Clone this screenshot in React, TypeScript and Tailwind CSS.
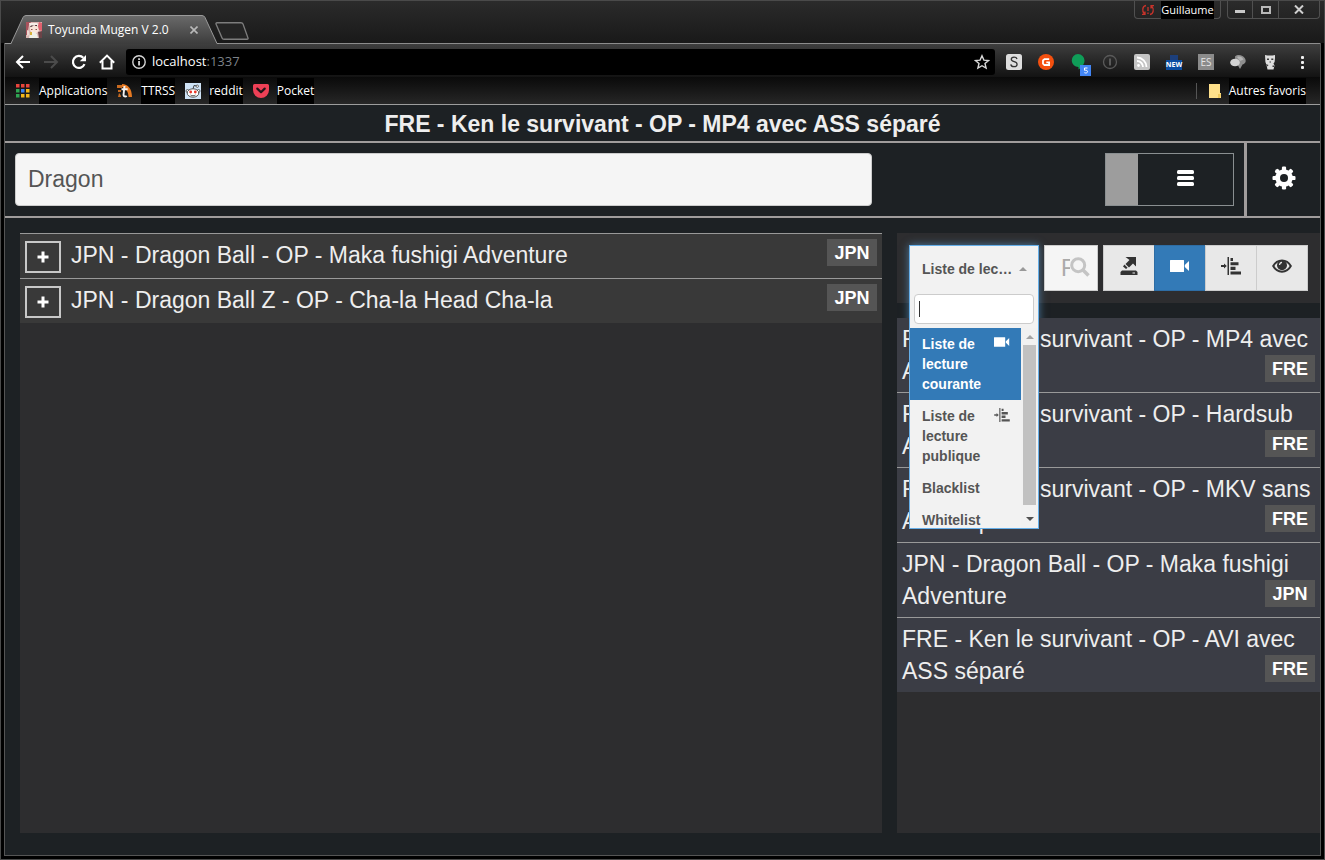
import React from "react";

type IconProps = { className?: string };

/* ---------- browser drawings ---------- */

const TabFavicon = () => (
  <svg viewBox="0 0 16 16" className="size-4 shrink-0" aria-hidden="true">
    <rect width="16" height="16" fill="#d9b7b3" />
    <path d="M0 0h5l-2 3-1 5-1 5H0z" fill="#a8525c" />
    <path d="M3 1h8l2 2-1 1-4-1-4 2z" fill="#f6efe9" />
    <path d="M5 3.500h2.500v1.500H4zM9 3h2v1.500H9z" fill="#4a3034" />
    <path d="M4 5.500l4-2 4 1 1 4-3 3H6L4 8z" fill="#f9e6da" />
    <path d="M13 0l3 1v8l-3-1-1-4z" fill="#e0616e" />
    <path d="M1 8l2 1v4l-2 1z" fill="#ecd8d2" />
    <path d="M4 11l4-1 3 2 1 4H3z" fill="#eef0e6" />
    <path d="M4 10h2v3H4z" fill="#d6b13a" />
    <path d="M5 7h1.500v1H5zM9.500 7H11v1H9.500z" fill="#8d5350" />
    <path d="M12 10l4-1v7h-3z" fill="#6b4347" />
  </svg>
);

const BackIcon = () => (
  <svg viewBox="0 0 16 16" className="size-4" fill="none" stroke="#fff" strokeWidth="2" aria-hidden="true">
    <path d="M15 8H2M8 2L2 8l6 6" />
  </svg>
);

const ForwardIcon = () => (
  <svg viewBox="0 0 16 16" className="size-4" fill="none" stroke="#4b4b4b" strokeWidth="2" aria-hidden="true">
    <path d="M1 8h13M8 2l6 6-6 6" />
  </svg>
);

const ReloadIcon = () => (
  <svg viewBox="0 0 16 16" className="size-4" aria-hidden="true">
    <path d="M13.500 10.200A6 6 0 1 1 12.300 3.800" fill="none" stroke="#fff" strokeWidth="2.200" />
    <path d="M15 1v6.200H8.800z" fill="#fff" />
  </svg>
);

const HomeIcon = () => (
  <svg viewBox="0 0 16 16" className="size-4" fill="none" stroke="#fff" strokeWidth="2" aria-hidden="true">
    <path d="M.8 8.700L8 1.600l7.200 7.100" />
    <path d="M3.500 7v7.500h9V7" />
  </svg>
);

const InfoIcon = () => (
  <svg viewBox="0 0 16 16" className="size-4 shrink-0" aria-hidden="true">
    <circle cx="8" cy="8" r="6.200" fill="none" stroke="#d5d5d5" strokeWidth="1.400" />
    <path d="M7.200 7h1.700v4.500H7.200zM7.200 4.300h1.700V6H7.200z" fill="#e4e4e4" />
  </svg>
);

const StarIcon = () => (
  <svg viewBox="0 0 16 16" className="size-4" aria-hidden="true">
    <path d="M8 1.800l1.900 4.300 4.600.4-3.500 3 1.100 4.600L8 11.700l-4.100 2.400L5 9.500l-3.500-3 4.600-.4z" fill="none" stroke="#d8d8d8" strokeWidth="1.400" />
  </svg>
);

const StylishIcon = () => (
  <svg viewBox="0 0 16 16" className="size-4" aria-hidden="true">
    <rect width="16" height="16" rx="2.500" fill="#dedede" />
    <path d="M11 5C10.600 3.700 9.500 3.200 8.100 3.200c-1.700 0-2.800.8-2.800 2.100 0 3.100 5.800 1.700 5.800 4.900 0 1.500-1.200 2.500-3.100 2.500-1.800 0-3-.8-3.200-2.400" fill="none" stroke="#333" strokeWidth="1.300" />
  </svg>
);

const GIcon = () => (
  <svg viewBox="0 0 16 16" className="size-4" aria-hidden="true">
    <circle cx="8" cy="8" r="8" fill="#f4500f" />
    <path d="M11.200 5.200H6.500L5 6.400v3.300L6.400 11h4.700V8.300H8.300" fill="none" stroke="#fff" strokeWidth="1.800" />
  </svg>
);

const HangoutsIcon = () => (
  <svg viewBox="0 0 20 22" className="h-[22px] w-5" aria-hidden="true">
    <path d="M7 0a6.500 6.500 0 0 1 6.500 6.500c0 4-3 7-6 9V13A6.500 6.500 0 1 1 7 0z" fill="#0f9d58" />
    <rect x="9" y="11" width="11" height="11" fill="#4285f4" />
    <path d="M16.500 14h-3v2.300c2.200-.5 3 .3 3 1.400s-1.500 1.700-3.100 1" fill="none" stroke="#fff" strokeWidth="1" />
  </svg>
);

const PasswordIcon = () => (
  <svg viewBox="0 0 16 16" className="size-4" fill="none" stroke="#5a5a5a" aria-hidden="true">
    <circle cx="8" cy="8" r="6.500" strokeWidth="1.300" />
    <path d="M8 4.500v7" strokeWidth="2" />
  </svg>
);

const FeedIcon = () => (
  <svg viewBox="0 0 16 16" className="size-4" aria-hidden="true">
    <rect width="16" height="16" rx="2" fill="#c4c4c4" />
    <circle cx="4.500" cy="11.500" r="1.400" fill="#fff" />
    <path d="M3 7a6 6 0 0 1 6 6M3 3.500A9.500 9.500 0 0 1 12.500 13" fill="none" stroke="#fff" strokeWidth="1.800" />
  </svg>
);

const NewsIcon = () => (
  <span className="flex size-4 flex-col justify-end">
    <span className="h-[5px] w-2 self-center bg-[#1c3f7c]" />
    <span className="flex h-[10px] items-center justify-center bg-[#0b4da2] text-[7px] font-bold text-white">NEW</span>
  </span>
);

const EsIcon = () => (
  <span className="flex size-4 items-center justify-center bg-[#8b8b8b] text-[10px] text-[#e4e4e4]">ES</span>
);

const CloudIcon = () => (
  <svg viewBox="0 0 16 16" className="size-4" aria-hidden="true">
    <path d="M5 2.500C8 0 13 1 15 4.500c1.500 3 .5 5-2.500 6L10 15l-2-3.500-2.500-1z" fill="#8f8f8f" />
    <ellipse cx="5" cy="8.500" rx="4.800" ry="3.800" fill="#d2d2d2" />
    <path d="M7 3c3-1 5 0 6.500 2.500L10 7z" fill="#b5b5b5" />
  </svg>
);

const PandaIcon = () => (
  <svg viewBox="0 0 16 16" className="size-4" aria-hidden="true">
    <path d="M3 1l2.500.6h5L13 1v3l-.4 4-1.100 1.500 1 2-1 4H5.500l-1-4.500L3.400 8z" fill="#dedede" />
    <path d="M5 4.500h2v1.500H5zM9.300 4.500h2V6h-2zM7.500 7.500h1.500v1H7.500zM4 10l2.500 1L5.500 12.500zM10.500 11.500H12V13h-1.500z" fill="#3a3a3a" />
  </svg>
);

const DotsIcon = () => (
  <svg viewBox="0 0 16 16" className="size-4" fill="#f0f0f0" aria-hidden="true">
    <rect x="7" y="2" width="3" height="3" rx="1" />
    <rect x="7" y="7" width="3" height="3" rx="1" />
    <rect x="7" y="12" width="3" height="3" rx="1" />
  </svg>
);

const APP_COLORS = ["#e8453c", "#e8453c", "#e8453c", "#2fa653", "#3b82f0", "#f4b61a", "#2fa653", "#f4b61a", "#f4b61a"];

const AppsIcon = () => (
  <svg viewBox="0 0 16 16" className="size-4" aria-hidden="true">
    {APP_COLORS.map((color, i) => (
      <rect key={i} x={1 + (i % 3) * 5} y={1 + Math.floor(i / 3) * 5} width="3.500" height="3.500" fill={color} />
    ))}
  </svg>
);

const TtrssIcon = () => (
  <svg viewBox="0 0 16 16" className="size-4" aria-hidden="true">
    <path d="M5 1c6 0 10 5 10 13h-3.500C11.500 8 8 5 5 4z" fill="#e87a22" />
    <path d="M0 2h5v3H0zM1 7h3v2H1zM2 10c1 1 2 2 2 4H1z" fill="#c96a20" />
    <path d="M7.500 3L6.500 12c0 1.500 2 2 3.200.8M4.500 6.300h6.200" fill="none" stroke="#f2f2f2" strokeWidth="1.900" />
  </svg>
);

const RedditIcon = () => (
  <svg viewBox="0 0 16 16" className="size-4" aria-hidden="true">
    <rect width="16" height="16" fill="#cfe3f6" />
    <path d="M8 6l1-3.500 3 .5" fill="none" stroke="#333" strokeWidth=".9" />
    <circle cx="12.300" cy="3.200" r="1.200" fill="#fff" stroke="#333" strokeWidth=".7" />
    <circle cx="2.500" cy="8" r="1.500" fill="#fff" stroke="#444" strokeWidth=".8" />
    <circle cx="13.500" cy="8" r="1.500" fill="#fff" stroke="#444" strokeWidth=".8" />
    <ellipse cx="8" cy="10" rx="5.800" ry="4.200" fill="#fff" stroke="#444" strokeWidth=".9" />
    <circle cx="5.700" cy="9" r="1.400" fill="#e8392c" />
    <circle cx="10.300" cy="9" r="1.400" fill="#e8392c" />
    <path d="M5.500 12c1.500 1 3.500 1 5 0" fill="none" stroke="#444" strokeWidth=".9" />
  </svg>
);

const PocketIcon = () => (
  <svg viewBox="0 0 16 16" className="size-4" aria-hidden="true">
    <path d="M1.500 1h13A1.500 1.500 0 0 1 16 2.500V7A8 8 0 0 1 0 7V2.500A1.500 1.500 0 0 1 1.500 1z" fill="#ee4056" />
    <path d="M4.300 5.600L8 9.200l3.700-3.600" fill="none" stroke="#221418" strokeWidth="2.200" strokeLinecap="round" strokeLinejoin="round" />
  </svg>
);

const FolderIcon = () => (
  <svg viewBox="0 0 12 14" className="h-[14px] w-3" aria-hidden="true">
    <path d="M0 0h11v9h1v5H0z" fill="#ffe08a" />
    <path d="M9 10h3l-1 4H9z" fill="#f0c95c" />
  </svg>
);

const SyncAlertIcon = () => (
  <svg viewBox="0 0 14 12" className="h-3 w-[14px]" fill="none" stroke="#c8332b" strokeWidth="1.300" aria-hidden="true">
    <path d="M5 1.500C1.500 2 .5 7 3.500 10M1 10.300h3V7.500M9 10.500c3.500-.5 4.500-5.500 1.500-8.500M13 1.700h-3v2.800M7 3v4M7 8.500V10" />
  </svg>
);

/* ---------- page glyphs ---------- */

const PlusGlyph = () => (
  <svg viewBox="0 0 12 12" className="mb-px size-3" fill="#fff" aria-hidden="true">
    <path d="M4.500.5h3v4h4v3h-4v4h-3v-4h-4v-3h4z" />
  </svg>
);

const MenuGlyph = () => (
  <svg viewBox="0 0 17 16" className="h-4 w-[17px]" fill="#fff" aria-hidden="true">
    <rect width="17" height="4" rx="1.500" />
    <rect y="6" width="17" height="4" rx="1.500" />
    <rect y="12" width="17" height="4" rx="1.500" />
  </svg>
);

const CogGlyph = () => (
  <svg viewBox="0 0 24 24" className="size-6" fill="#fff" aria-hidden="true">
    <mask id="cog-hole" maskUnits="userSpaceOnUse" x="0" y="0" width="24" height="24">
      <rect width="24" height="24" fill="#fff" />
      <circle cx="12" cy="12" r="4" fill="#000" />
    </mask>
    <g mask="url(#cog-hole)">
      {[0, 45, 90, 135].map((angle) => (
        <rect key={angle} x="9.900" y=".5" width="4.200" height="23" rx="1.200" transform={`rotate(${angle} 12 12)`} />
      ))}
      <circle cx="12" cy="12" r="8.700" />
    </g>
  </svg>
);

const SearchGlyph = () => (
  <svg viewBox="0 0 20 20" className="size-5" fill="none" stroke="#c4c4c4" aria-hidden="true">
    <circle cx="8.200" cy="8.200" r="6.500" strokeWidth="3" />
    <path d="M13 13l5.500 5.500" strokeWidth="3.600" />
  </svg>
);

const OpenGlyph = ({ className = "" }: IconProps) => (
  <svg viewBox="0 0 18 18" className={className} fill="currentColor" aria-hidden="true">
    <path d="M5.500 0H16v9.500l-3-3-4 4L5.500 7 9.500 3z" />
    <path d="M4.400 7.600l3.200 3.200-1.600 1.200L3 9.400z" />
    <path d="M2 13.500h14l1.500 1.500v3H.5v-3z" />
    <path d="M12.500 15.500H15v1h-2.500z" fill="#e8e8e8" />
  </svg>
);

const VideoGlyph = ({ className = "" }: IconProps) => (
  <svg viewBox="0 0 20 12" className={className} fill="currentColor" aria-hidden="true">
    <path d="M.5 0H13.500a.5.5 0 0 1 .5.500v11a.5.5 0 0 1-.5.500H.5a.5.5 0 0 1-.5-.5V.5A.5.500 0 0 1 .5 0zM14.800 5L19 1v10l-4.200-4z" />
  </svg>
);

const TimelineGlyph = ({ className = "" }: IconProps) => (
  <svg viewBox="0 0 20 18" className={className} fill="currentColor" aria-hidden="true">
    <path d="M0 8h3V6.500L5.800 9 3 11.500V10H0zM6.500 0H8v18H6.500zM9.500 1h2.500v3H9.500zM9.500 5.200h8v3h-8zM9.500 9.700h5v3.300h-5zM9.500 14.500H20v3H9.500z" />
  </svg>
);

const EyeGlyph = ({ className = "" }: IconProps) => (
  <svg viewBox="0 0 20 14" className={className} aria-hidden="true">
    <path d="M1.200 7c4-7.500 13.600-7.500 17.600 0-4 7.500-13.600 7.500-17.600 0z" fill="none" stroke="currentColor" strokeWidth="2" />
    <circle cx="10" cy="6.200" r="5" fill="currentColor" />
    <path d="M7.500 6C7.600 4.500 8.500 3.600 10 3.400" fill="none" stroke="#e8e8e8" strokeWidth="1.200" />
  </svg>
);

/* ---------- data ---------- */

const EXTENSIONS = [
  { name: "Stylish", icon: <StylishIcon /> },
  { name: "G", icon: <GIcon /> },
  { name: "Hangouts", icon: <span className="relative block size-4"><span className="absolute top-0 left-px w-5"><HangoutsIcon /></span></span> },
  { name: "Mots de passe", icon: <PasswordIcon /> },
  { name: "Flux", icon: <FeedIcon /> },
  { name: "Nouveautés", icon: <NewsIcon /> },
  { name: "ES", icon: <EsIcon /> },
  { name: "Nuage", icon: <CloudIcon /> },
  { name: "Panda", icon: <PandaIcon /> },
  { name: "Menu", icon: <DotsIcon /> },
];

const BOOKMARKS = [
  { label: "Applications", icon: <AppsIcon /> },
  { label: "TTRSS", icon: <TtrssIcon /> },
  { label: "reddit", icon: <RedditIcon /> },
  { label: "Pocket", icon: <PocketIcon /> },
];

const RESULTS = [
  { lang: "JPN", title: "JPN - Dragon Ball - OP - Maka fushigi Adventure" },
  { lang: "JPN", title: "JPN - Dragon Ball Z - OP - Cha-la Head Cha-la" },
];

const PLAYLIST = [
  { lang: "FRE", title: "FRE - Ken le survivant - OP - MP4 avec ASS séparé" },
  { lang: "FRE", title: "FRE - Ken le survivant - OP - Hardsub AVI" },
  { lang: "FRE", title: "FRE - Ken le survivant - OP - MKV sans ASS séparé" },
  { lang: "JPN", title: "JPN - Dragon Ball - OP - Maka fushigi Adventure" },
  { lang: "FRE", title: "FRE - Ken le survivant - OP - AVI avec ASS séparé" },
];

const OPTIONS = [
  { label: "Liste de lecture courante", icon: <VideoGlyph className="mt-[3px] h-[10px] w-4 shrink-0" />, selected: true },
  { label: "Liste de lecture publique", icon: <TimelineGlyph className="mt-[2px] h-[14px] w-4 shrink-0" /> },
  { label: "Blacklist" },
  { label: "Whitelist" },
];

const VIEWS = [
  { name: "Ouvrir", icon: <OpenGlyph className="h-[18px] w-[18px]" /> },
  { name: "Liste courante", icon: <VideoGlyph className="h-3 w-5" />, active: true },
  { name: "Liste publique", icon: <TimelineGlyph className="h-[18px] w-5" /> },
  { name: "Afficher", icon: <EyeGlyph className="h-[14px] w-5" /> },
];

/* ---------- components ---------- */

function TitleBar() {
  return (
    <div className="flex h-[42px] items-end justify-between bg-linear-to-b from-[#2b2b2b] to-[#191919] pl-1">
      <div className="flex items-end">
        <div className="relative z-10 -mb-px flex h-[29px] w-[214px] items-center pl-[21px]">
          <svg viewBox="0 0 214 29" className="absolute inset-0 h-full w-full" preserveAspectRatio="none" aria-hidden="true">
            <defs>
              <linearGradient id="tab-fill" x1="0" y1="0" x2="0" y2="1">
                <stop offset="0" stopColor="#6a6a6a" />
                <stop offset="1" stopColor="#3c3c3c" />
              </linearGradient>
            </defs>
            <path d="M6 29L18 2.500Q19 .5 21 .5H197Q199 .5 200 2.500L212 28.500V29z" fill="url(#tab-fill)" />
            <path d="M0 28.500H6L18 2.500Q19 .5 21 .5H197Q199 .5 200 2.500L212 28.500H214" fill="none" stroke="#9a9a9a" />
          </svg>
          <span className="relative flex w-full items-center gap-[6px]">
            <TabFavicon />
            <span className="w-[134px] text-[12px] whitespace-nowrap text-white">Toyunda Mugen V 2.0</span>
            <button aria-label="Fermer l'onglet" className="flex size-3 items-center justify-center">
              <svg viewBox="0 0 8 8" className="size-2" stroke="#b9b9b9" strokeWidth="1.600" aria-hidden="true">
                <path d="M.5.5l7 7M7.500.5l-7 7" />
              </svg>
            </button>
          </span>
        </div>
        <button aria-label="Nouvel onglet" className="-ml-1 mb-[3px] h-[18px] w-[34px]">
          <svg viewBox="0 0 34 17" className="h-full w-full" preserveAspectRatio="none" aria-hidden="true">
            <path d="M2 .7h24q1.500 0 2 1.300l5 13q.5 1.300-1 1.300H9q-1.500 0-2-1.300L1 2Q.6.7 2 .7z" fill="#242424" stroke="#7d7d7d" strokeWidth="1.300" />
          </svg>
        </button>
      </div>
      <div className="flex items-start gap-[6px] self-start pr-1 text-[12px] text-white">
        <button className="flex h-[18px] w-[87px] items-center justify-center gap-[6px] rounded-b border border-t-0 border-[#505050]">
          <SyncAlertIcon />
          <span className="bg-black text-[11px] leading-[18px] font-medium">Guillaume</span>
        </button>
        <div className="flex h-[18px] rounded-b border border-t-0 border-[#505050]">
          <button aria-label="Réduire" className="flex w-[25px] items-center justify-center border-r border-[#505050]">
            <span className="mt-1 h-[3px] w-[10px] bg-[#c9c9c9]" />
          </button>
          <button aria-label="Agrandir" className="flex w-[26px] items-center justify-center border-r border-[#505050]">
            <span className="h-2 w-[10px] border-2 border-[#b9b9b9]" />
          </button>
          <button aria-label="Fermer" className="flex w-10 items-center justify-center">
            <svg viewBox="0 0 10 9" className="h-[9px] w-[10px]" stroke="#cfcfcf" strokeWidth="2" aria-hidden="true">
              <path d="M1 .5l8 8M9 .5l-8 8" />
            </svg>
          </button>
        </div>
      </div>
    </div>
  );
}

function ToolBar() {
  return (
    <div className="flex h-[34px] items-center border-t border-[#8c8c8c] bg-linear-to-b from-[#3e3e3e] to-[#131313] px-[10px] pt-[3px]">
      <div className="flex gap-3">
        <button aria-label="Précédent"><BackIcon /></button>
        <button aria-label="Suivant"><ForwardIcon /></button>
        <button aria-label="Actualiser"><ReloadIcon /></button>
        <button aria-label="Accueil"><HomeIcon /></button>
      </div>
      <div className="mr-[11px] ml-[11px] flex h-[26px] flex-1 items-center gap-[5px] rounded-[3px] bg-black px-[5px] text-[13px]">
        <InfoIcon />
        <a href="#page" className="flex-1 text-white">localhost<span className="text-[#7d8288]">:1337</span></a>
        <button aria-label="Ajouter aux favoris"><StarIcon /></button>
      </div>
      <div className="flex gap-4">
        {EXTENSIONS.map((ext) => (
          <button key={ext.name} aria-label={ext.name} className="size-4">{ext.icon}</button>
        ))}
      </div>
    </div>
  );
}

function BookmarkBar() {
  return (
    <nav className="flex h-7 items-center justify-between border-b border-[#9d9d9d] bg-linear-to-b from-[#0a0a0a] to-[#272727] pr-[14px] pl-[10px] text-[12px] text-white">
      <div className="flex gap-[10px]">
        {BOOKMARKS.map((mark) => (
          <a key={mark.label} href="#page" className="flex items-center gap-2">
            {mark.icon}
            <span className="bg-black leading-[26px]">{mark.label}</span>
          </a>
        ))}
      </div>
      <div className="flex items-center gap-3">
        <span className="h-4 w-px bg-[#555]" />
        <a href="#page" className="flex items-center gap-2">
          <FolderIcon />
          <span className="bg-black leading-[26px]">Autres favoris</span>
        </a>
      </div>
    </nav>
  );
}

function LangBadge({ lang }: { lang: string }) {
  return (
    <span className="flex h-[27px] w-[50px] shrink-0 items-center justify-center bg-[#555] text-[18px] font-bold text-white">{lang}</span>
  );
}

function PlaylistSelect() {
  return (
    <div className="relative w-[130px] shrink-0 text-[14px] leading-5 font-bold text-[#555]">
      <div className="absolute inset-x-0 top-0 h-[284px] shadow-[0_0_8px_rgba(102,175,233,0.6)]" />
      <button aria-haspopup="listbox" aria-expanded="true" className="relative z-20 flex h-[46px] w-full items-center justify-between border border-b-0 border-[#66afe9] bg-[#f2f2f2] pr-[11px] pl-3">
        <span>Liste de lec…</span>
        <span className="border-x-4 border-b-4 border-x-transparent border-b-[#999]" />
      </button>
      <div className="absolute inset-x-0 top-full z-20 border border-t-0 border-[#66afe9] bg-[#f2f2f2] pt-[3px]">
        <div className="mx-1 flex h-[30px] items-center rounded border border-[#ccc] bg-white px-1">
          <span className="h-4 w-px bg-[#333]" />
          <input aria-label="Filtrer les listes" className="h-full w-full min-w-0 bg-transparent font-normal text-[#333] outline-none" />
        </div>
        <div className="mt-1 flex h-[200px] overflow-hidden">
          <ul role="listbox" aria-label="Listes de lecture" className="flex-1">
            {OPTIONS.map((option) => (
              <li
                key={option.label}
                role="option"
                aria-selected={!!option.selected}
                className={option.selected ? "flex justify-between bg-[#337ab7] py-[6px] pr-[11px] pl-3 text-white" : "flex justify-between py-[6px] pr-[11px] pl-3"}
              >
                <span className="w-[64px]">{option.label}</span>
                {option.icon}
              </li>
            ))}
          </ul>
          <div className="flex w-[17px] flex-col items-center bg-[#f1f1f1] pt-[7px]">
            <span className="border-x-4 border-b-4 border-x-transparent border-b-[#a3a3a3]" />
            <span className="mt-[6px] mb-3 h-[160px] w-[13px] bg-[#c1c1c1]" />
            <span className="border-x-4 border-t-4 border-x-transparent border-t-[#505050]" />
          </div>
        </div>
      </div>
    </div>
  );
}

export default function App() {
  return (
    <div className="flex min-h-screen flex-col border border-[#4a4a4a] bg-black font-['Open_Sans','Noto_Sans',sans-serif]">
      <TitleBar />
      <div className="mx-[3px] mb-[3px] flex flex-1 flex-col border-x border-b border-[#555]">
        <ToolBar />
        <BookmarkBar />

        <main id="page" className="flex flex-1 flex-col bg-[#1d2124] font-['Liberation_Sans',Arial,sans-serif] text-[23px] leading-8 text-[#eee]">
          <h1 className="h-9 pt-[3px] text-center font-bold">FRE - Ken le survivant - OP - MP4 avec ASS séparé</h1>

          <header className="flex border-y-2 border-[#a09c9c]">
            <div className="w-2/3 p-[10px]">
              <input
                aria-label="Rechercher"
                defaultValue="Dragon"
                className="block h-[53px] w-full rounded border border-[#ccc] bg-[#f5f5f5] px-3 text-[#555] outline-none"
              />
            </div>
            <div className="flex flex-1 justify-end p-[10px]">
              <button aria-label="Basculer la vue" className="flex h-[53px] w-[129px] border border-[#8a8f91]">
                <span className="h-full w-8 bg-[#9d9d9d]" />
                <span className="flex h-full flex-1 items-center justify-center pb-[3px]"><MenuGlyph /></span>
              </button>
            </div>
            <button aria-label="Paramètres" className="flex w-[76px] items-center justify-center border-l-3 border-[#a09c9c] pb-1">
              <CogGlyph />
            </button>
          </header>

          <div className="grid flex-1 grid-cols-[862fr_423fr] gap-[15px] pt-[15px] pb-[22px] pl-[15px]">
            <section aria-label="Résultats" className="bg-[#2d2d2f]">
              <ul>
                {RESULTS.map((song) => (
                  <li key={song.title} className="flex h-[45px] items-start gap-[10px] border-t border-[#999] bg-[#393939] p-[5px]">
                    <button aria-label="Ajouter" className="mt-[2px] flex h-8 w-9 items-center justify-center border-2 border-[#c8c8c8]">
                      <PlusGlyph />
                    </button>
                    <span className="flex-1">{song.title}</span>
                    <LangBadge lang={song.lang} />
                  </li>
                ))}
              </ul>
            </section>

            <section aria-label="Liste de lecture" className="flex flex-col">
              <div className="flex h-[70px] gap-[5px] bg-[#2d2d2f] p-3">
                <PlaylistSelect />
                <div className="relative h-[46px] min-w-[54px] flex-1">
                  <input aria-label="Filtrer" placeholder="F" className="h-full w-full border border-[#ccc] bg-[#f5f5f5] pl-4 text-[#999] outline-none placeholder:text-[#aaa]" />
                  <span className="absolute top-3 right-2 bg-[#f5f5f5]"><SearchGlyph /></span>
                </div>
                <div className="flex h-[46px]">
                  {VIEWS.map((view) => (
                    <button
                      key={view.name}
                      aria-label={view.name}
                      className={
                        view.active
                          ? "-ml-px flex w-[52px] items-center justify-center border border-[#2e6da4] bg-[#337ab7] pb-1 text-white first:ml-0"
                          : "-ml-px flex w-[52px] items-center justify-center border border-[#ccc] bg-[#e8e8e8] pb-1 text-[#333] first:ml-0"
                      }
                    >
                      {view.icon}
                    </button>
                  ))}
                </div>
              </div>

              <div className="mt-[15px] flex-1 bg-[#2d2d2f]">
                <ul className="divide-y divide-[#999]">
                  {PLAYLIST.map((song) => (
                    <li key={song.title} className="relative min-h-[74px] bg-[#3b3d45] p-[5px]">
                      {song.title}
                      <span className="absolute right-[5px] bottom-[10px]"><LangBadge lang={song.lang} /></span>
                    </li>
                  ))}
                </ul>
              </div>
            </section>
          </div>
        </main>
      </div>
    </div>
  );
}
